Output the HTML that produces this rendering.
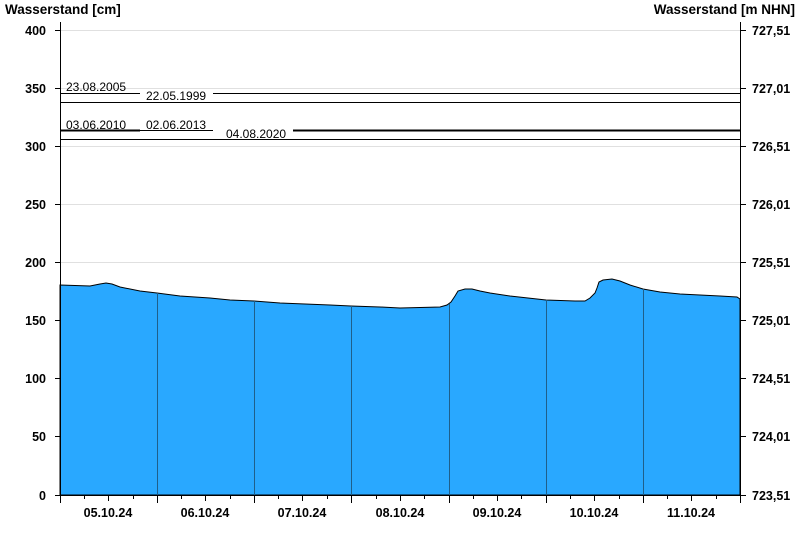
<!DOCTYPE html><html><head><style>body{margin:0;background:#fff}svg{display:block}text{font-family:"Liberation Sans",Arial,sans-serif;font-size:12px}.b{font-weight:bold;font-size:12.5px}.h{font-weight:bold;font-size:13.5px}</style></head><body>
<svg width="800" height="550" xmlns="http://www.w3.org/2000/svg">
<rect width="800" height="550" fill="#fff"/>
<g stroke="#e0e0e0" stroke-width="1">
<line x1="60" x2="740" y1="30.5" y2="30.5"/><line x1="60" x2="740" y1="88.5" y2="88.5"/><line x1="60" x2="740" y1="146.5" y2="146.5"/><line x1="60" x2="740" y1="204.5" y2="204.5"/><line x1="60" x2="740" y1="262.5" y2="262.5"/><line x1="60" x2="740" y1="320.5" y2="320.5"/><line x1="60" x2="740" y1="378.5" y2="378.5"/><line x1="60" x2="740" y1="436.5" y2="436.5"/>
</g>
<path d="M60,285 L90,286 L100,284 L106,283 L112,284 L120,287 L140,291 L157,293 L180,296 L210,298 L230,300 L254,301 L280,303 L330,305 L351,306 L380,307 L400,308 L440,307 L447,305 L451,302 L455,296 L458,291 L465,289 L472,289 L480,291 L490,293 L510,296 L546,300 L575,301 L585,301 L590,298 L595,293 L597,288 L599,282 L603,280 L612,279 L620,281 L630,285 L643,289 L660,292 L680,294 L720,296 L737,297 L740,299 L740,495 L60,495 Z" fill="#29a8ff" stroke="#000" stroke-width="1"/>
<g stroke="#1f5f8a" stroke-width="1">
<line x1="157.5" x2="157.5" y1="293" y2="495"/><line x1="254.5" x2="254.5" y1="301" y2="495"/><line x1="351.5" x2="351.5" y1="306" y2="495"/><line x1="449.5" x2="449.5" y1="304" y2="495"/><line x1="546.5" x2="546.5" y1="300" y2="495"/><line x1="643.5" x2="643.5" y1="289" y2="495"/>
</g>
<g stroke="#000" stroke-width="1">
<line x1="60" x2="140" y1="93.5" y2="93.5"/><line x1="213" x2="740" y1="93.5" y2="93.5"/>
<line x1="60" x2="740" y1="102.5" y2="102.5"/>
<line x1="60" x2="140" y1="130.5" y2="130.5" stroke-width="2"/><line x1="140" x2="213" y1="130.5" y2="130.5"/><line x1="293" x2="740" y1="130.5" y2="130.5" stroke-width="2"/>
<line x1="60" x2="740" y1="139.5" y2="139.5"/>
<line x1="60.5" x2="60.5" y1="22" y2="495"/><line x1="740.5" x2="740.5" y1="22" y2="495"/>
<line x1="60" x2="741" y1="495.5" y2="495.5"/>
</g>
<g stroke="#000" stroke-width="1">
<path d="M55,30.5H60M55,88.5H60M55,146.5H60M55,204.5H60M55,262.5H60M55,320.5H60M55,378.5H60M55,436.5H60M55,495.5H60"/>
<path d="M740,30.5H746M740,88.5H746M740,146.5H746M740,204.5H746M740,262.5H746M740,320.5H746M740,378.5H746M740,436.5H746M740,495.5H746"/>
<path d="M60.5,495V503M157.5,495V503M254.5,495V503M351.5,495V503M449.5,495V503M546.5,495V503M643.5,495V503M740.5,495V503"/>
<path d="M84.5,495V499M133.5,495V499M181.5,495V499M230.5,495V499M278.5,495V499M327.5,495V499M376.5,495V499M424.5,495V499M473.5,495V499M521.5,495V499M570.5,495V499M619.5,495V499M667.5,495V499M716.5,495V499"/>
<path d="M108.5,495V501M205.5,495V501M302.5,495V501M400.5,495V501M497.5,495V501M594.5,495V501M691.5,495V501"/>
</g>
<text x="66" y="91">23.08.2005</text><text x="146" y="100">22.05.1999</text>
<text x="66" y="129">03.06.2010</text><text x="146" y="129">02.06.2013</text><text x="226" y="138">04.08.2020</text>
<text class="h" x="5" y="14">Wasserstand [cm]</text>
<text class="h" x="795" y="14" text-anchor="end">Wasserstand [m NHN]</text>
<g text-anchor="end">
<text class="b" x="46" y="35">400</text><text class="b" x="46" y="93">350</text><text class="b" x="46" y="151">300</text><text class="b" x="46" y="209">250</text><text class="b" x="46" y="267">200</text><text class="b" x="46" y="325">150</text><text class="b" x="46" y="383">100</text><text class="b" x="46" y="441">50</text><text class="b" x="46" y="500">0</text>
</g>
<g>
<text class="b" x="752" y="35">727,51</text><text class="b" x="752" y="93">727,01</text><text class="b" x="752" y="151">726,51</text><text class="b" x="752" y="209">726,01</text><text class="b" x="752" y="267">725,51</text><text class="b" x="752" y="325">725,01</text><text class="b" x="752" y="383">724,51</text><text class="b" x="752" y="441">724,01</text><text class="b" x="752" y="500">723,51</text>
</g>
<g text-anchor="middle">
<text class="b" x="108" y="517">05.10.24</text><text class="b" x="205" y="517">06.10.24</text><text class="b" x="302" y="517">07.10.24</text><text class="b" x="400" y="517">08.10.24</text><text class="b" x="497" y="517">09.10.24</text><text class="b" x="594" y="517">10.10.24</text><text class="b" x="691" y="517">11.10.24</text>
</g>
</svg>
</body></html>
